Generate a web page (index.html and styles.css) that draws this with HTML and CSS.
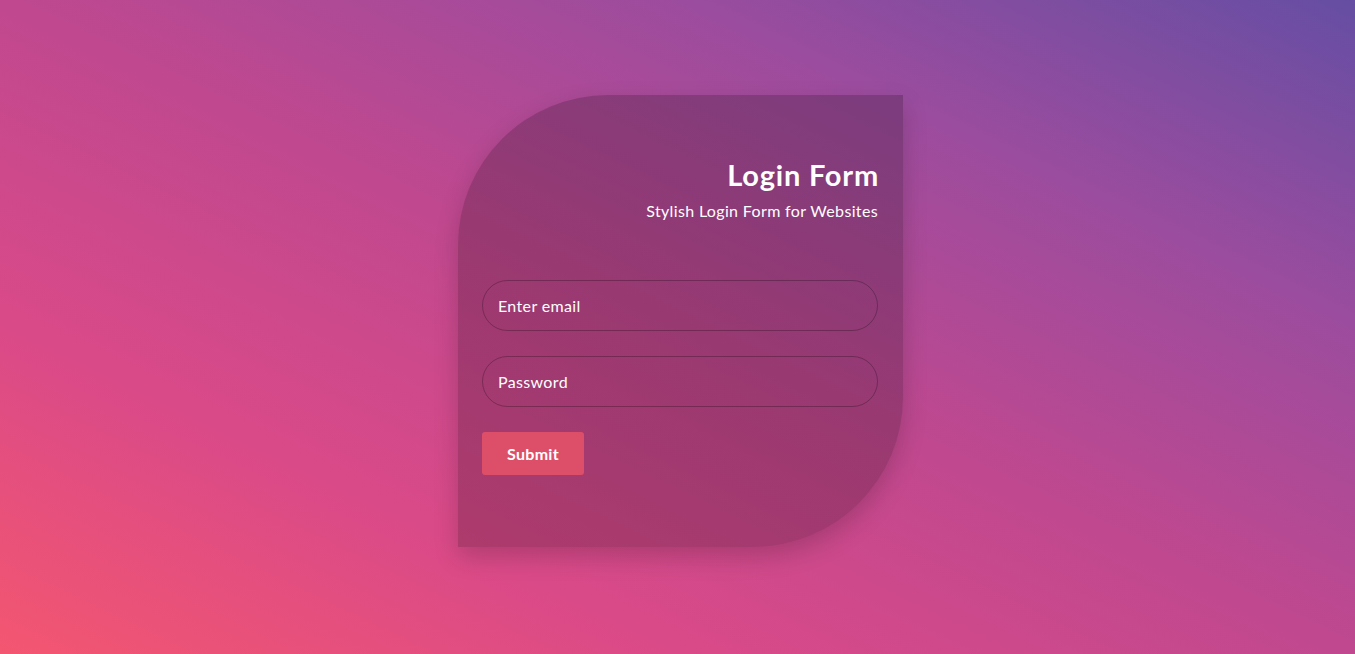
FILE: index.html
```html
<!DOCTYPE html>
<html lang="en">
<head>
<meta charset="utf-8">
<title>Login Form</title>
<link rel="stylesheet" href="styles.css">
</head>
<body>
<main class="page">
  <form class="card" onsubmit="return false">
    <header class="card-head">
      <h1 class="title">Login Form</h1>
      <p class="subtitle">Stylish Login Form for Websites</p>
    </header>
    <input class="field" type="email" placeholder="Enter email">
    <input class="field" type="password" placeholder="Password">
    <div class="actions">
      <button class="submit" type="submit">Submit</button>
    </div>
  </form>
</main>
</body>
</html>
```
FILE: styles.css
```css
* { box-sizing: border-box; }
html, body { margin: 0; height: 100%; }
body {
  font-family: "Lato", "Noto Sans", sans-serif;
  background: linear-gradient(to top right, #f35670 0%, #da4a88 25%, #c0488f 50%, #9c4c9e 75%, #654ea3 100%);
  overflow: hidden;
}
.page {
  padding-top: 95px;
  padding-left: calc(50% - 219.5px);
}
.card {
  width: 445px;
  height: 452px;
  background: rgba(0, 0, 0, 0.2);
  border-radius: 150px 0 150px 0;
  box-shadow: 0 10px 25px rgba(0, 0, 0, 0.18);
  padding: 59px 24px 0 24px;
  display: flex;
  flex-direction: column;
}
.card-head {
  text-align: right;
  color: #fff;
  margin-bottom: 59px;
  margin-right: 1px;
}
.title {
  margin: 0 -1px 0 0;
  font-size: 29px;
  font-weight: 700;
  line-height: 42px;
  letter-spacing: 0.8px;
}
.subtitle {
  margin: 5px 0 0;
  font-size: 16px;
  line-height: 20px;
  font-weight: 400;
  letter-spacing: 0.35px;
}
.field {
  width: 396px;
  height: 51px;
  border: 1px solid rgba(0, 0, 0, 0.25);
  border-radius: 26px;
  background: transparent;
  padding: 0 15px;
  font-family: inherit;
  font-size: 16px;
  letter-spacing: 0.35px;
  color: #fff;
  margin-bottom: 25px;
  outline: none;
}
.field::placeholder { color: #fff; opacity: 1; }
.actions { display: flex; }
.submit {
  width: 102px;
  height: 43px;
  border: none;
  border-radius: 3px;
  background: #dd4f69;
  color: #fff;
  font-family: inherit;
  font-size: 16px;
  font-weight: 700;
  letter-spacing: 0.3px;
  cursor: pointer;
}
```
